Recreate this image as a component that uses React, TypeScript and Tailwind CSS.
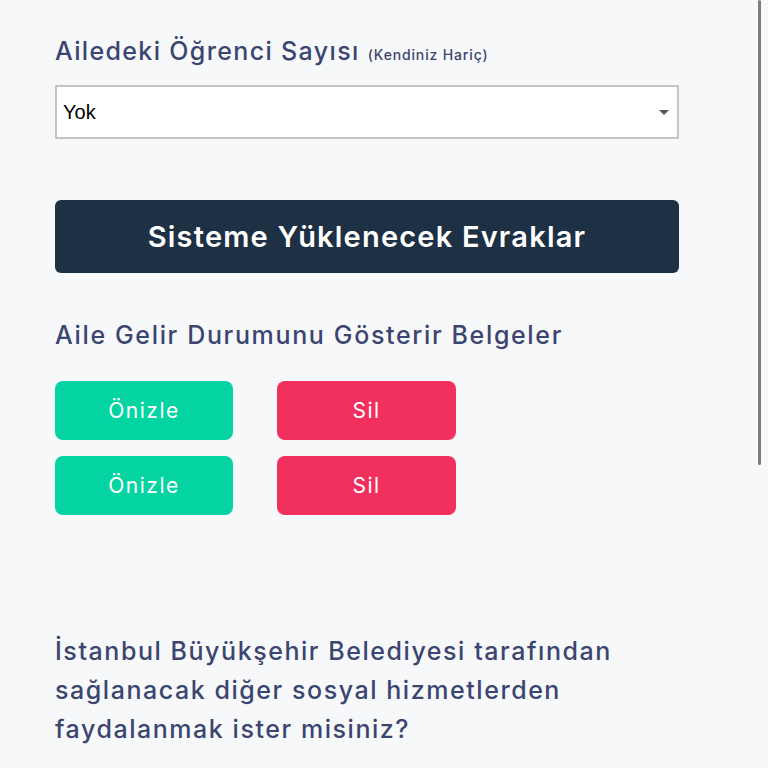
import { useState } from "react";

const heading =
  "text-[25px] leading-[32px] font-medium text-[#3b4570] font-['Inter',sans-serif]";

function DocRow() {
  return (
    <div className="flex gap-[44px]">
      <button className="h-[59px] w-[178px] rounded-[8px] bg-[#03d4a1] text-[21px] tracking-[1.5px] text-white font-['Inter',sans-serif]">
        Önizle
      </button>
      <button className="h-[59px] w-[179px] rounded-[8px] bg-[#f2305e] text-[21px] tracking-[1.5px] text-white font-['Inter',sans-serif]">
        Sil
      </button>
    </div>
  );
}

export default function App() {
  const [count, setCount] = useState("Yok");

  return (
    <div className="relative min-h-[768px] w-full overflow-hidden bg-[#f7f8fa]">
      <div className="w-[624px] ml-[55px] pt-[35px]">
        <h2 className={`${heading} tracking-[1.35px]`}>
          Ailedeki Öğrenci Sayısı{" "}
          <span className="text-[14px] leading-none tracking-[0.85px]">(Kendiniz Hariç)</span>
        </h2>

        <div className="relative mt-[18px]">
          <select
            value={count}
            onChange={(e) => setCount(e.target.value)}
            className="h-[54px] w-full appearance-none border-2 border-[#c4c4c4] bg-white pl-[6px] text-[20px] text-black font-['Liberation_Sans',sans-serif] outline-none"
          >
            <option>Yok</option>
            <option>1</option>
            <option>2</option>
            <option>3</option>
          </select>
          <span className="pointer-events-none absolute right-[10px] top-[25px] h-0 w-0 border-x-[5px] border-t-[5px] border-x-transparent border-t-[#555]" />
        </div>

        <div className="mt-[61px] flex h-[73px] items-center justify-center rounded-[6px] bg-[#1e3044]">
          <span className="text-[29px] font-semibold tracking-[1.2px] text-white font-['Inter',sans-serif]">
            Sisteme Yüklenecek Evraklar
          </span>
        </div>

        <h3 className={`mt-[46px] ${heading} tracking-[1.65px]`}>
          Aile Gelir Durumunu Gösterir Belgeler
        </h3>

        <div className="mt-[30px] flex flex-col gap-[16px]">
          <DocRow />
          <DocRow />
        </div>

        <p className={`mt-[117px] ${heading} leading-[39px] tracking-[1.55px]`}>
          İstanbul Büyükşehir Belediyesi tarafından
          <br />
          sağlanacak diğer sosyal hizmetlerden
          <br />
          faydalanmak ister misiniz?
        </p>
      </div>

      {/* overlay scroll thumb */}
      <div className="absolute right-[7px] top-0 h-[465px] w-[3px] rounded-full bg-[#7d7d7d]" />
    </div>
  );
}
